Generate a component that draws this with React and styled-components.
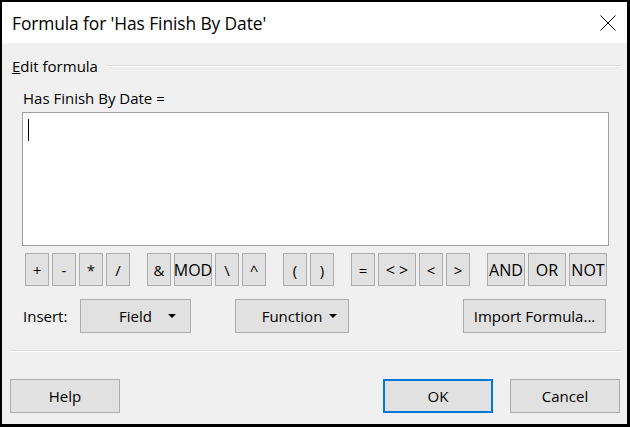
import React from "react";
import styled, { createGlobalStyle } from "styled-components";

const Global = createGlobalStyle`
  html, body { margin: 0; padding: 0; background: #f0f0f0; }
  * { box-sizing: border-box; }
`;

const FONT = `"Segoe UI", "Open Sans", "Noto Sans", sans-serif`;

const Window = styled.div`
  width: 630px;
  height: 427px;
  border-style: solid;
  border-color: #000;
  border-width: 2px 3px 3px 2px;
  background: #f0f0f0;
  display: flex;
  flex-direction: column;
  font-family: ${FONT};
  color: #000;
  overflow: hidden;
`;

const TitleBar = styled.div`
  height: 41px;
  flex: none;
  background: #fff;
  display: flex;
  align-items: center;
  justify-content: space-between;
  padding: 0 11px 0 10px;
`;

const Title = styled.div`
  font-size: 17.4px;
  letter-spacing: -0.1px;
  white-space: nowrap;
`;

const Body = styled.div`
  flex: 1;
  display: flex;
  flex-direction: column;
  padding: 14px 5px 0 10px;
`;

const GroupHeader = styled.div`
  display: flex;
  align-items: center;
  height: 18px;
  font-size: 15px;
`;

const GroupLine = styled.div`
  flex: 1;
  height: 2px;
  margin-left: 8px;
  border-top: 1px solid #dcdcdc;
  border-bottom: 1px solid #ffffff;
`;

const FieldLabel = styled.div`
  font-size: 15px;
  height: 18px;
  line-height: 18px;
  margin: 14px 0 0 11px;
`;

const Editor = styled.div`
  margin: 5px 0 0 10px;
  width: 587px;
  height: 134px;
  background: #fff;
  border: 1px solid #a0a0a0;
  padding: 6px 5px;
`;

const Caret = styled.div`
  width: 1px;
  height: 22px;
  background: #000;
`;

const OpRow = styled.div`
  display: flex;
  margin: 7px 0 0 13px;
  gap: 17px;
`;

const OpGroup = styled.div`
  display: flex;
  gap: 3px;
`;

const Btn = styled.div`
  background: #e1e1e1;
  border: 1px solid #adadad;
  display: flex;
  align-items: center;
  justify-content: center;
  font-size: 15px;
  white-space: nowrap;
`;

const OpBtn = styled(Btn)`
  width: ${(p) => (p.$wide ? 38 : 24)}px;
  height: 33px;
  font-size: ${(p) => (p.$wide ? 16 : 15)}px;
`;

const InsertRow = styled.div`
  display: flex;
  align-items: center;
  margin: 13px 0 0 11px;
  height: 34px;
`;

const InsertLabel = styled.div`
  font-size: 15px;
  width: 57px;
`;

const DropBtn = styled(Btn)`
  display: grid;
  grid-template-columns: 1fr auto 1fr;
  align-items: center;
  width: ${(p) => p.$w}px;
  height: 34px;
  margin-right: ${(p) => p.$mr || 0}px;
  & > span:first-child { grid-column: 2; }
`;

const Arrow = styled.svg`
  justify-self: end;
  margin-right: ${(p) => p.$mr}px;
`;

const WideBtn = styled(Btn)`
  width: ${(p) => p.$w}px;
  height: 34px;
  margin-right: ${(p) => p.$mr || 0}px;
`;

const Spacer = styled.div`
  flex: 1;
`;

const Separator = styled.div`
  height: 2px;
  margin: 17px 0 0 -2px;
  width: 612px;
  border-top: 1px solid #dcdcdc;
  border-bottom: 1px solid #fff;
`;

const Footer = styled.div`
  display: flex;
  margin: 27px 0 0 -2px;
  width: 610px;
`;

const FootBtn = styled(Btn)`
  width: 110px;
  height: 34px;
  border: ${(p) => (p.$primary ? "2px solid #0078d7" : "1px solid #adadad")};
  margin-right: ${(p) => p.$mr || 0}px;
`;

const groups = [
  [["+"], ["-"], ["*"], ["/"]],
  [["&"], ["MOD", true], ["\\"], ["^"]],
  [["("], [")"]],
  [["="], ["< >", true], ["<"], [">"]],
  [["AND", true], ["OR", true], ["NOT", true]],
];

const DownArrow = ({ mr }) => (
  <Arrow $mr={mr} width="8" height="4" viewBox="0 0 8 4">
    <path d="M0 0 L8 0 L4 4 Z" fill="#000" />
  </Arrow>
);

export default function App() {
  return (
    <>
      <Global />
      <Window>
        <TitleBar>
          <Title>Formula for 'Has Finish By Date'</Title>
          <svg width="16" height="16" viewBox="0 0 16 16">
            <path d="M0.5 0.5 L15.5 15.5 M15.5 0.5 L0.5 15.5" stroke="#000" strokeWidth="1" fill="none" />
          </svg>
        </TitleBar>
        <Body>
          <GroupHeader>
            <span>
              <u>E</u>dit formula
            </span>
            <GroupLine />
          </GroupHeader>
          <FieldLabel>Has Finish By Date =</FieldLabel>
          <Editor>
            <Caret />
          </Editor>
          <OpRow>
            {groups.map((g, i) => (
              <OpGroup key={i}>
                {g.map(([t, w]) => (
                  <OpBtn key={t} $wide={w}>
                    {t}
                  </OpBtn>
                ))}
              </OpGroup>
            ))}
          </OpRow>
          <InsertRow>
            <InsertLabel>Insert:</InsertLabel>
            <DropBtn $w={111} $mr={44}>
              <span>Field</span>
              <DownArrow mr={14} />
            </DropBtn>
            <DropBtn $w={114}>
              <span>Function</span>
              <DownArrow mr={11} />
            </DropBtn>
            <Spacer />
            <WideBtn $w={143} $mr={16}>Import Formula...</WideBtn>
          </InsertRow>
          <Separator />
          <Footer>
            <FootBtn>Help</FootBtn>
            <Spacer />
            <FootBtn $primary $mr={17}>OK</FootBtn>
            <FootBtn>Cancel</FootBtn>
          </Footer>
        </Body>
      </Window>
    </>
  );
}
